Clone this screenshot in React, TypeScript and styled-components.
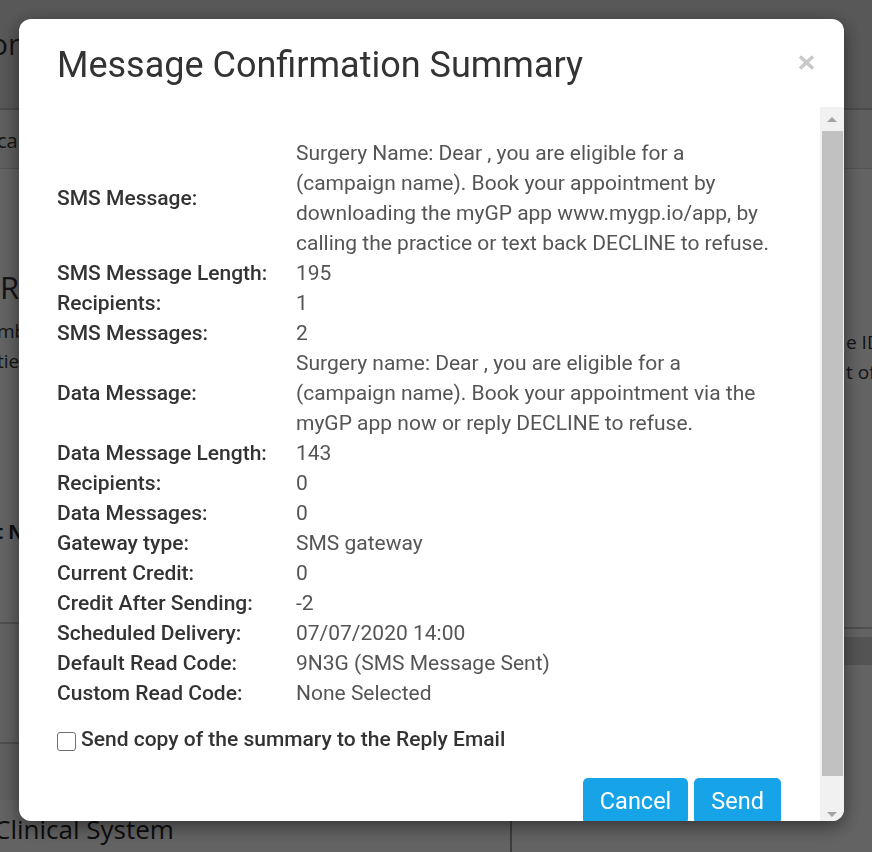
import React from 'react';
import styled, { createGlobalStyle } from 'styled-components';

const GlobalStyle = createGlobalStyle`
  html, body { margin: 0; padding: 0; }
  body {
    font-family: Roboto, "Liberation Sans", sans-serif;
    background: #f7f7f7;
    overflow: hidden;
  }
  * { box-sizing: border-box; }
`;

/* ---------- background page ---------- */
const Page = styled.div`
  width: 872px;
  height: 852px;
  display: flex;
  flex-direction: column;
  overflow: hidden;
  background: #f7f7f7;
  color: #444;
  font-family: "Open Sans", Roboto, sans-serif;
`;

const TopHeader = styled.header`
  height: 110px;
  flex: none;
  background: #dbdbdb;
  border-bottom: 2px solid #bcbcbc;
  padding-top: 24px;
`;

const PageTitle = styled.h1`
  margin: 0 0 0 -10px;
  font-size: 30px;
  font-weight: 400;
  line-height: 40px;
  white-space: nowrap;
  color: #333;
`;

const TabBar = styled.nav`
  height: 59px;
  flex: none;
  background: #ececec;
  border-bottom: 1px solid #cfcfcf;
  display: flex;
  align-items: center;
  padding-top: 2px;
  font-size: 20px;
  color: #333;
  white-space: nowrap;
`;

const TabLabel = styled.span`
  margin-left: -3px;
`;

const Main = styled.main`
  height: 453px;
  flex: none;
  display: flex;
`;

const LeftCol = styled.section`
  width: 510px;
  flex: none;
  padding-top: 99px;
`;

const RightCol = styled.section`
  flex: 1;
  padding: 158px 0 0 336px;
`;

const SectionHeading = styled.h2`
  margin: 0;
  font-size: 31px;
  font-weight: 400;
  line-height: 38px;
  color: #333;
  white-space: nowrap;
`;

const Para = styled.p<{ $shift?: number }>`
  margin: 0 0 0 ${(p) => p.$shift ?? 0}px;
  font-size: 19px;
  line-height: 30px;
  white-space: nowrap;
  color: #333;
`;

const FirstPara = styled(Para)`
  margin-top: 10px;
`;

const StrongLine = styled.p`
  margin: 143px 0 0 -5px;
  font-size: 19px;
  font-weight: 700;
  white-space: nowrap;
  color: #222;
`;

const LowerWrap = styled.div`
  flex: 1;
  display: flex;
`;

const LowerLeft = styled.div`
  width: 510px;
  flex: none;
  display: flex;
  flex-direction: column;
`;

const Band = styled.div<{ $h: number; $bg: string }>`
  height: ${(p) => p.$h}px;
  flex: none;
  background: ${(p) => p.$bg};
  border-top: 2px solid #c3c3c3;
`;

const FooterHeading = styled.h2`
  margin: 12px 0 0 -6px;
  font-size: 26px;
  line-height: 34px;
  font-weight: 400;
  color: #222;
  white-space: nowrap;
`;

const RightLowerCol = styled.div`
  flex: 1;
  display: flex;
  flex-direction: column;
`;

const RightTableHead = styled.div`
  margin-top: 5px;
  height: 38px;
  border-top: 2px solid #c3c3c3;
  background: #f7f7f7;
  display: flex;
  flex-direction: column;
`;

const RightTableBand = styled.div`
  margin-top: 8px;
  height: 28px;
  background: #d2d2d2;
`;

const LowerRight = styled.div`
  flex: 1;
  border-left: 2px solid #9a9a9a;
  margin-top: 150px;
`;

/* ---------- overlay + modal ---------- */
const Overlay = styled.div`
  position: fixed;
  inset: 0;
  background: rgba(0, 0, 0, 0.6);
`;

const Modal = styled.div`
  position: fixed;
  top: 19px;
  left: 19px;
  width: 825px;
  height: 802px;
  background: #fff;
  border-radius: 12px;
  overflow: hidden;
  display: flex;
  flex-direction: column;
  box-shadow: 0 5px 18px rgba(0, 0, 0, 0.5);
  font-family: Roboto, "Liberation Sans", sans-serif;
`;

const ModalHeader = styled.div`
  height: 88px;
  flex: none;
  display: flex;
  justify-content: space-between;
  align-items: flex-start;
  padding: 27px 29px 0 38px;
`;

const ModalTitle = styled.h4`
  margin: 0;
  font-size: 36px;
  font-weight: 400;
  line-height: 1.1;
  color: #333;
`;

const CloseButton = styled.button`
  margin-top: 9px;
  padding: 0;
  border: 0;
  background: transparent;
  width: 17px;
  height: 15px;
  display: flex;
  cursor: pointer;
`;

const ModalBody = styled.div`
  flex: 1;
  min-height: 0;
  display: flex;
`;

const ScrollContent = styled.div`
  flex: 1;
  overflow: hidden;
  padding: 31px 39px 0 38px;
`;

const Rows = styled.div`
  display: grid;
  grid-template-columns: 239px 1fr;
  font-size: 21px;
  line-height: 30px;
`;

const Label = styled.div`
  align-self: center;
  font-weight: 500;
  color: #333;
`;

const Value = styled.div`
  font-weight: 400;
  color: #555;
`;

const CheckRow = styled.label`
  margin-top: 16px;
  display: flex;
  align-items: center;
  gap: 5px;
  font-size: 21px;
  line-height: 30px;
  font-weight: 500;
  color: #333;
`;

const CheckBox = styled.input`
  appearance: none;
  margin: 5px 0 0 0;
  width: 19px;
  height: 19px;
  border: 1px solid #6f6f6f;
  border-radius: 3px;
  background: #fff;
  flex: none;
`;

const Footer = styled.div`
  margin-top: 24px;
  display: flex;
  justify-content: flex-end;
  gap: 6px;
`;

const Button = styled.button`
  height: 46px;
  padding: 0 17px;
  border: 0;
  border-radius: 5px;
  background: #17a3e8;
  color: #fff;
  font-family: Roboto, "Liberation Sans", sans-serif;
  font-size: 23.5px;
  line-height: 46px;
  cursor: pointer;
`;

const ScrollBar = styled.div`
  width: 24px;
  flex: none;
  background: #f1f1f1;
  display: flex;
  flex-direction: column;
`;

const ScrollArrow = styled.div<{ $pad: number }>`
  height: 22px;
  flex: none;
  display: flex;
  justify-content: center;
  align-items: flex-start;
  padding: ${(p) => p.$pad}px 1px 0 0;
`;

const ScrollTrack = styled.div`
  flex: 1;
  padding: 2px 1px 0 2px;
`;

const ScrollThumb = styled.div`
  height: 645px;
  background: #c1c1c1;
`;

const rows: [string, string][] = [
  [
    'SMS Message:',
    'Surgery Name: Dear , you are eligible for a (campaign name). Book your appointment by downloading the myGP app www.mygp.io/app, by calling the practice or text back DECLINE to refuse.',
  ],
  ['SMS Message Length:', '195'],
  ['Recipients:', '1'],
  ['SMS Messages:', '2'],
  [
    'Data Message:',
    'Surgery name: Dear , you are eligible for a (campaign name). Book your appointment via the myGP app now or reply DECLINE to refuse.',
  ],
  ['Data Message Length:', '143'],
  ['Recipients:', '0'],
  ['Data Messages:', '0'],
  ['Gateway type:', 'SMS gateway'],
  ['Current Credit:', '0'],
  ['Credit After Sending:', '-2'],
  ['Scheduled Delivery:', '07/07/2020 14:00'],
  ['Default Read Code:', '9N3G (SMS Message Sent)'],
  ['Custom Read Code:', 'None Selected'],
];

const Triangle = ({ up }: { up: boolean }) => (
  <svg width="10" height="5" viewBox="0 0 10 5">
    <polygon points={up ? '0,5 5,0 10,5' : '0,0 10,0 5,5'} fill="#a3a3a3" />
  </svg>
);

export default function App() {
  return (
    <>
      <GlobalStyle />
      <Page>
        <TopHeader>
          <PageTitle>on</PageTitle>
        </TopHeader>
        <TabBar>
          <TabLabel>cal</TabLabel>
        </TabBar>
        <Main>
          <LeftCol>
            <SectionHeading>Re</SectionHeading>
            <FirstPara $shift={-3}>mb</FirstPara>
            <Para $shift={-3}>tie</Para>
            <StrongLine>t N</StrongLine>
          </LeftCol>
          <RightCol>
            <Para>e ID</Para>
            <Para>t of</Para>
          </RightCol>
        </Main>
        <LowerWrap>
          <LowerLeft>
            <Band $h={120} $bg="#f3f3f3" />
            <Band $h={58} $bg="#ececec" />
            <FooterHeading>Clinical System</FooterHeading>
          </LowerLeft>
          <RightLowerCol>
            <RightTableHead>
              <RightTableBand />
            </RightTableHead>
            <LowerRight />
          </RightLowerCol>
        </LowerWrap>
      </Page>
      <Overlay />
      <Modal>
        <ModalHeader>
          <ModalTitle>Message Confirmation Summary</ModalTitle>
          <CloseButton aria-label="Close">
            <svg width="17" height="15" viewBox="0 0 17 15">
              <path d="M2 1.5 L15 13.5 M15 1.5 L2 13.5" stroke="#c9c9c9" strokeWidth="3.6" />
            </svg>
          </CloseButton>
        </ModalHeader>
        <ModalBody>
          <ScrollContent>
            <Rows>
              {rows.map(([l, v], i) => (
                <React.Fragment key={i}>
                  <Label>{l}</Label>
                  <Value>{v}</Value>
                </React.Fragment>
              ))}
            </Rows>
            <CheckRow>
              <CheckBox type="checkbox" />
              Send copy of the summary to the Reply Email
            </CheckRow>
            <Footer>
              <Button>Cancel</Button>
              <Button>Send</Button>
            </Footer>
          </ScrollContent>
          <ScrollBar>
            <ScrollArrow $pad={10}>
              <Triangle up />
            </ScrollArrow>
            <ScrollTrack>
              <ScrollThumb />
            </ScrollTrack>
            <ScrollArrow $pad={13}>
              <Triangle up={false} />
            </ScrollArrow>
          </ScrollBar>
        </ModalBody>
      </Modal>
    </>
  );
}
